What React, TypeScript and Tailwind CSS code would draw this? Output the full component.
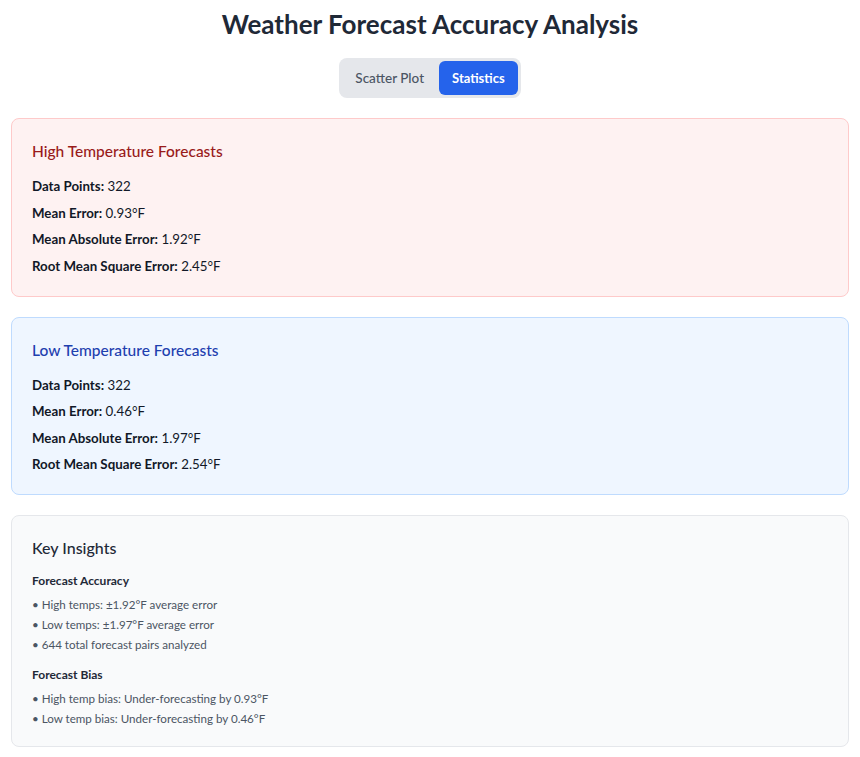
const font = "font-['Lato',_'Noto_Sans',_sans-serif]";

interface Stat {
  label: string;
  value: string;
}

interface StatCardProps {
  title: string;
  stats: Stat[];
  cardCls: string;
  titleCls: string;
}

const highStats: Stat[] = [
  { label: 'Data Points:', value: '322' },
  { label: 'Mean Error:', value: '0.93°F' },
  { label: 'Mean Absolute Error:', value: '1.92°F' },
  { label: 'Root Mean Square Error:', value: '2.45°F' },
];

const lowStats: Stat[] = [
  { label: 'Data Points:', value: '322' },
  { label: 'Mean Error:', value: '0.46°F' },
  { label: 'Mean Absolute Error:', value: '1.97°F' },
  { label: 'Root Mean Square Error:', value: '2.54°F' },
];

function StatCard({ title, stats, cardCls, titleCls }: StatCardProps) {
  return (
    <div className={`rounded-lg border p-5 ${cardCls}`}>
      <h2 className={`text-[15.5px] leading-6 font-medium mb-[13px] ${titleCls}`}>{title}</h2>
      <div className="flex flex-col gap-[6.5px]">
        {stats.map(s => (
          <p key={s.label} className="text-[13.3px] leading-5 text-[#111827]">
            <span className="font-bold">{s.label}</span> {s.value}
          </p>
        ))}
      </div>
    </div>
  );
}

export default function App() {
  return (
    <div className={`${font} bg-white min-h-[757px] px-[11px] pt-2 pb-4`}>
      <h1 className="text-center text-[26px] leading-8 font-bold text-[#1f2937] mb-[18px]">
        Weather Forecast Accuracy Analysis
      </h1>

      <div className="flex justify-center mb-5">
        <div className="flex gap-0.5 rounded-lg bg-[#e5e7eb] p-[3px]">
          <button className="rounded-md px-[13px] py-[7px] text-[13.5px] leading-5 font-medium text-[#4b5563]">
            Scatter Plot
          </button>
          <button className="rounded-md bg-[#2563eb] px-[13px] py-[7px] text-[13px] leading-5 font-bold text-white">
            Statistics
          </button>
        </div>
      </div>

      <div className="flex flex-col gap-5">
        <StatCard
          title="High Temperature Forecasts"
          stats={highStats}
          cardCls="bg-[#fef2f2] border-[#fecaca]"
          titleCls="text-[#991b1b]"
        />
        <StatCard
          title="Low Temperature Forecasts"
          stats={lowStats}
          cardCls="bg-[#eff6ff] border-[#bfdbfe]"
          titleCls="text-[#1e40af]"
        />

        <div className="rounded-lg border border-[#e5e7eb] bg-[#f9fafb] px-5 pt-[22px] pb-[17px]">
          <h2 className="text-base leading-5 font-medium text-[#1f2937] mb-[13px]">Key Insights</h2>
          <h3 className="text-xs leading-5 font-bold text-[#1f2937] mb-1">Forecast Accuracy</h3>
          <ul className="text-[11.6px] leading-5 text-[#4b5563] mb-[10px]">
            <li>• High temps: ±1.92°F average error</li>
            <li>• Low temps: ±1.97°F average error</li>
            <li>• 644 total forecast pairs analyzed</li>
          </ul>
          <h3 className="text-xs leading-5 font-bold text-[#1f2937] mb-1">Forecast Bias</h3>
          <ul className="text-[11.6px] leading-5 text-[#4b5563]">
            <li>• High temp bias: Under-forecasting by 0.93°F</li>
            <li>• Low temp bias: Under-forecasting by 0.46°F</li>
          </ul>
        </div>
      </div>
    </div>
  );
}
